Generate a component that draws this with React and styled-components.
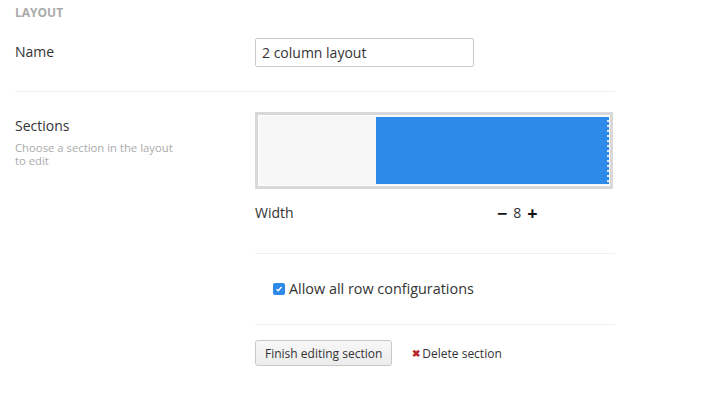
import React from 'react';
import styled, { createGlobalStyle } from 'styled-components';

const GlobalStyle = createGlobalStyle`
    html, body {
        margin: 0;
        padding: 0;
        background: #fff;
        font-family: "Open Sans", "Liberation Sans", sans-serif;
        color: #333;
    }
`

const Page = styled.div`
    width: 600px;
    padding: 5px 15px 0 15px;
`

const Heading = styled.div`
    font-size: 12px;
    font-weight: bold;
    line-height: 16px;
    color: #aaa;
    text-transform: uppercase;
    margin-bottom: 17px;
`

const Row = styled.div`
    display: grid;
    grid-template-columns: 240px 360px;
    align-items: start;
`

const Label = styled.div`
    font-size: 14px;
    line-height: 20px;
    padding-top: ${props => props.$top || 0}px;
`

const Help = styled.div`
    font-size: 11.3px;
    line-height: 13px;
    color: #aaa;
    margin-top: 5px;
    width: 162px;
`

const TextInput = styled.input`
    box-sizing: border-box;
    width: 219px;
    height: 29px;
    border: 1px solid #ccc;
    border-radius: 2px;
    padding: 0 6px;
    font-family: inherit;
    font-size: 14px;
    color: #333;
    outline: none;
`

const Divider = styled.div`
    height: 1px;
    background: #f0f0f0;
    margin: ${props => props.$margin};
`

const LayoutBox = styled.div`
    box-sizing: border-box;
    width: 358px;
    height: 77px;
    border: 3px solid #d9d9d9;
    padding: 1px;
    background: #fff;
`

const Grid = styled.div`
    display: grid;
    grid-template-columns: repeat(12, 1fr);
    height: 100%;
    background: #f7f7f7;
`

const Section = styled.div`
    grid-column: ${props => props.$start} / span ${props => props.$span};
    margin: 1px 0;
    background-image: repeating-linear-gradient(180deg, #2d8ae8 0 3px, #dfe6ee 3px 5px);
    background-size: 2px 100%;
    background-position: right top;
    background-repeat: no-repeat;
    background-color: #2d8ae8;
`

const WidthRow = styled.div`
    display: flex;
    align-items: center;
    margin-top: 14px;
    font-size: 14px;
    line-height: 20px;
`

const WidthLabel = styled.div`
    width: 242px;
`

const Stepper = styled.div`
    display: flex;
    align-items: center;
    gap: 6px;
    font-size: 14px;
`

const StepButton = styled.span`
    font-weight: bold;
    font-size: 18px;
    line-height: 20px;
    color: #111;
`

const CheckRow = styled.label`
    display: flex;
    align-items: center;
    gap: 4px;
    padding-left: 18px;
    font-size: 14.4px;
    line-height: 20px;
`

const Check = styled.span`
    width: 12px;
    height: 12px;
    border-radius: 2px;
    background: #2d8ae8;
    display: inline-flex;
    align-items: center;
    justify-content: center;
`

const Actions = styled.div`
    display: flex;
    align-items: center;
    gap: 20px;
`

const Button = styled.button`
    box-sizing: border-box;
    height: 26px;
    padding: 0 9px;
    border: 1px solid #c8c8c8;
    border-radius: 3px;
    background: linear-gradient(#f7f7f7, #ececec);
    font-family: inherit;
    font-size: 12px;
    color: #333;
`

const DeleteLink = styled.span`
    display: flex;
    align-items: center;
    gap: 2px;
    font-size: 12px;
    color: #333;
`

const Cross = styled.span`
    color: #b52a2a;
    font-weight: bold;
    font-size: 10px;
`

export default function App() {
    return (
        <Page>
            <GlobalStyle />
            <Heading>Layout</Heading>
            <Row>
                <Label $top={4}>Name</Label>
                <TextInput defaultValue="2 column layout" />
            </Row>
            <Divider $margin="24px 0 20px 0" />
            <Row>
                <div>
                    <Label $top={4}>Sections</Label>
                    <Help>Choose a section in the layout to edit</Help>
                </div>
                <div>
                    <LayoutBox>
                        <Grid>
                            <Section $start={5} $span={8} />
                        </Grid>
                    </LayoutBox>
                    <WidthRow>
                        <WidthLabel>Width</WidthLabel>
                        <Stepper>
                            <StepButton>&minus;</StepButton>
                            <span>8</span>
                            <StepButton>+</StepButton>
                        </Stepper>
                    </WidthRow>
                    <Divider $margin="30px 0 25px 0" />
                    <CheckRow>
                        <Check>
                            <svg width="8" height="8" viewBox="0 0 8 8">
                                <path d="M1.5 4.2 L3.2 5.8 L6.5 2" stroke="#fff" strokeWidth="1.4" fill="none" />
                            </svg>
                        </Check>
                        Allow all row configurations
                    </CheckRow>
                    <Divider $margin="25px 0 15px 0" />
                    <Actions>
                        <Button>Finish editing section</Button>
                        <DeleteLink><Cross>&#10006;</Cross>Delete section</DeleteLink>
                    </Actions>
                </div>
            </Row>
        </Page>
    );
}
